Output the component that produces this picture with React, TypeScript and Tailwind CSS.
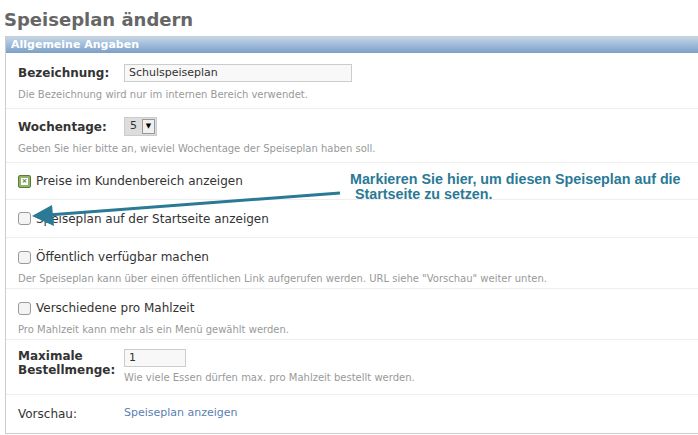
import React from "react";

const Help = ({ children }: { children: React.ReactNode }) => (
  <div className="text-[10px] text-[#999] mt-[5px]">{children}</div>
);

const Box = ({ checked }: { checked?: boolean }) =>
  checked ? (
    <div className="w-[13px] h-[13px] rounded-[2px] border border-[#5a7a3a] bg-[#8fb568] flex items-center justify-center">
      <div className="w-[7px] h-[7px] bg-white text-[7px] leading-[7px] text-[#5a7a3a] text-center font-bold">×</div>
    </div>
  ) : (
    <div className="w-[13px] h-[13px] rounded-[3px] border border-[#999] bg-[#f4f4f4]" />
  );

export default function App() {
  return (
    <div className="w-[698px] h-[435px] bg-white relative overflow-hidden" style={{ fontFamily: '"DejaVu Sans", Verdana, sans-serif' }}>
      <h1 className="text-[18px] font-bold text-[#666] pl-[4px] pt-[6px] leading-[28px]">Speiseplan ändern</h1>
      <div className="ml-[5px] mt-[2px] border border-[#ccc] border-r-0 h-[398px]">
        <div className="h-[16px] bg-gradient-to-b from-[#c2d5e8] to-[#7ca0c7] text-white text-[11px] font-bold pl-[5px] leading-[16px]">Allgemeine Angaben</div>
        <div className="border-b border-[#eee] h-[56px] pl-[12px] pt-[11px]">
          <div className="flex items-center">
            <span className="w-[106px] text-[12px] font-bold text-[#333]">Bezeichnung:</span>
            <div className="w-[228px] h-[18px] border border-[#ccc] bg-[#f8f8f8] text-[11px] text-[#333] pl-[4px] leading-[16px]">Schulspeiseplan</div>
          </div>
          <Help>Die Bezeichnung wird nur im internen Bereich verwendet.</Help>
        </div>
        <div className="border-b border-[#eee] h-[54px] pl-[12px] pt-[8px]">
          <div className="flex items-center">
            <span className="w-[106px] text-[12px] font-bold text-[#333]">Wochentage:</span>
            <div className="flex items-center h-[19px] bg-[#ddd] border border-[#ccc]">
              <span className="text-[11px] px-[5px] text-[#333]">5</span>
              <div className="w-[13px] h-[15px] bg-[#f0f0f0] border border-[#999] mr-[1px] flex items-center justify-center text-[7px]">▼</div>
            </div>
          </div>
          <Help>Geben Sie hier bitte an, wieviel Wochentage der Speiseplan haben soll.</Help>
        </div>
        <div className="border-b border-[#eee] h-[37px] pl-[12px] flex items-center gap-[5px]">
          <Box checked />
          <span className="text-[12px] text-[#333]">Preise im Kundenbereich anzeigen</span>
        </div>
        <div className="border-b border-[#eee] h-[38px] pl-[12px] flex items-center gap-[5px]">
          <Box />
          <span className="text-[12px] text-[#333]">Speiseplan auf der Startseite anzeigen</span>
        </div>
        <div className="border-b border-[#eee] h-[51px] pl-[12px] pt-[10px]">
          <div className="flex items-center gap-[5px]">
            <Box />
            <span className="text-[12px] text-[#333]">Öffentlich verfügbar machen</span>
          </div>
          <Help>Der Speiseplan kann über einen öffentlichen Link aufgerufen werden. URL siehe "Vorschau" weiter unten.</Help>
        </div>
        <div className="border-b border-[#eee] h-[51px] pl-[12px] pt-[10px]">
          <div className="flex items-center gap-[5px]">
            <Box />
            <span className="text-[12px] text-[#333]">Verschiedene pro Mahlzeit</span>
          </div>
          <Help>Pro Mahlzeit kann mehr als ein Menü gewählt werden.</Help>
        </div>
        <div className="border-b border-[#eee] h-[55px] pl-[12px] pt-[9px] flex">
          <span className="w-[106px] text-[12px] font-bold text-[#333] leading-[14px]">Maximale<br />Bestellmenge:</span>
          <div>
            <div className="w-[62px] h-[18px] border border-[#ccc] bg-[#f8f8f8] text-[11px] text-[#333] pl-[4px] leading-[16px]">1</div>
            <div className="text-[10px] text-[#999] mt-[3px]">Wie viele Essen dürfen max. pro Mahlzeit bestellt werden.</div>
          </div>
        </div>
        <div className="h-[37px] pl-[12px] flex items-center">
          <span className="w-[106px] text-[12px] text-[#333]">Vorschau:</span>
          <span className="text-[11px] text-[#5b80b2]">Speiseplan anzeigen</span>
        </div>
      </div>
      <div className="absolute left-[350px] top-[172px] text-[14.3px] font-bold text-[#2a7a96] leading-[15px]" style={{ fontFamily: '"Liberation Sans Narrow", "Liberation Sans", Arial, sans-serif' }}>
        Markieren Sie hier, um diesen Speiseplan auf die<br /><span className="pl-[5px]">Startseite zu setzen.</span>
      </div>
      <svg className="absolute left-0 top-0" width="698" height="435">
        <line x1="340" y1="193" x2="48" y2="215" stroke="#2a7a96" strokeWidth="3" />
        <polygon points="32,216 52,205 54,226" fill="#2a7a96" />
      </svg>
    </div>
  );
}
